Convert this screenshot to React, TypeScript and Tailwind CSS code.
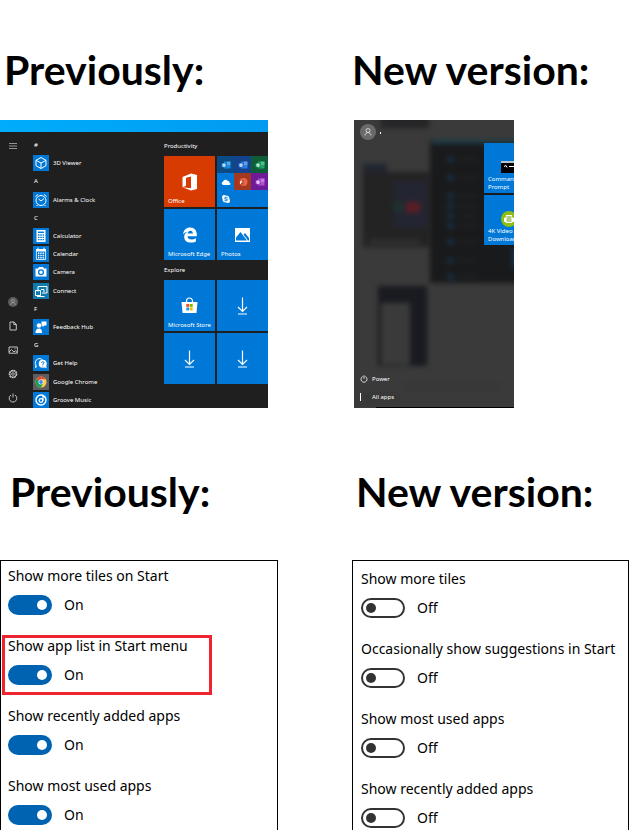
import React, { useState } from 'react';

const Glyph = ({ name }: { name: string }) => {
    const line = { fill: 'none', stroke: '#fff', strokeWidth: 1 };
    return (
        <svg viewBox="0 0 16 16" className="w-4 h-4 shrink-0">
            {name === 'viewer' && <path {...line} d="M8 2.500l5 2.800v5.400L8 13.500l-5-2.800V5.300zM3 5.300L8 8l5-2.700M8 8v5.500" />}
            {name === 'alarm' && (
                <>
                    <circle {...line} cx="8" cy="8.500" r="5" />
                    <path {...line} d="M5.500 7L8 9l3-2.500M2.500 4.500L5 2.500M13.500 4.500L11 2.500M4.500 13l-1 1M11.500 13l1 1" />
                </>
            )}
            {name === 'calculator' && (
                <>
                    <path fill="#fff" d="M3.500 2h9v12h-9z" />
                    <path stroke="#0078d7" strokeWidth="1.500" d="M5 4.300h6" />
                    <path stroke="#0078d7" strokeWidth="1.300" strokeDasharray="1.500 .8" d="M5 7h6M5 9.300h6M5 11.700h6" />
                </>
            )}
            {name === 'calendar' && (
                <>
                    <path fill="#fff" d="M3 3h10v2.500H3zM4.500 1.500h1V4h-1zM10.500 1.500h1V4h-1z" />
                    <path {...line} strokeWidth=".8" d="M3.400 5v8.500h9.200V5" />
                    <path stroke="#fff" strokeWidth="1.400" strokeDasharray="1 .7" d="M5 7.300h6.500M5 9.500h6.500M5 11.700h6.500" />
                </>
            )}
            {name === 'camera' && (
                <>
                    <path fill="#fff" d="M2.500 4.500H5L6 3h4l1 1.500h2.500v8h-11z" />
                    <circle cx="8" cy="8.300" r="2.400" fill="none" stroke="#0078d7" strokeWidth="1.300" />
                </>
            )}
            {name === 'connect' && <path {...line} d="M5 8.500V3.500h9v6.500H9M2.500 7.500h5v5h-5zM4 13.500h7.500M8 6.500h3v2.500" />}
            {name === 'feedback' && (
                <>
                    <circle cx="6" cy="6.500" r="2.300" fill="#fff" />
                    <path fill="#fff" d="M2.500 14c0-3 1.200-4.500 3.500-4.500S9 11 9 14zM8.500 2.500h5v4h-2L9.500 8V6.500h-1z" />
                </>
            )}
            {name === 'help' && (
                <>
                    <path {...line} d="M4 11.500l-1.500 1 .5-2.500a4 4 0 1 1 7-4.500" />
                    <circle cx="9.700" cy="8.800" r="4" fill="#fff" />
                    <path fill="#fff" d="M11 12l2.800 1.500L13 10z" />
                    <path fill="none" stroke="#0078d7" d="M8.500 7.800c0-1.600 2.500-1.500 2.500 0 0 .8-1.300 1-1.300 2M9.700 10.700v.8" />
                </>
            )}
            {name === 'chrome' && (
                <>
                    <circle cx="8" cy="8" r="5.500" fill="#ffcd40" />
                    <path fill="#dd4f43" d="M8 8L3.200 5.300A5.500 5.500 0 0 1 12.800 5.300H8z" />
                    <path fill="#1a9f5c" d="M3.200 5.300L8 8l2.400 1.300-2.600 4.200A5.500 5.500 0 0 1 3.200 5.300z" />
                    <circle cx="8" cy="8" r="2.500" fill="#fff" />
                    <circle cx="8" cy="8" r="1.900" fill="#4285f4" />
                </>
            )}
            {name === 'groove' && (
                <>
                    <circle {...line} strokeWidth="1.400" cx="8" cy="8" r="5" />
                    <circle {...line} strokeWidth="1.300" cx="8" cy="8.500" r="1.800" />
                    <path {...line} strokeWidth="1.200" d="M10 8.500V3.500l2 1.500" />
                </>
            )}
        </svg>
    );
};

const RailIcon = ({ name }: { name: string }) => (
    <svg viewBox="0 0 12 12" className="w-3 h-3" fill="none" stroke="#d4d4d4" strokeWidth=".9">
        {name === 'menu' && <path stroke="#a0a0a0" d="M2 3.500h8M2 6h8M2 8.500h8" />}
        {name === 'user' && (
            <>
                <circle cx="6" cy="6" r="5" fill="#5c5c5c" stroke="none" />
                <circle cx="6" cy="4.800" r="1.500" stroke="#aaa" strokeWidth=".7" />
                <path stroke="#aaa" strokeWidth=".7" d="M3.700 9c0-3.300 4.600-3.300 4.600 0" />
            </>
        )}
        {name === 'document' && <path d="M3 2h4l2.300 2.300V10H3zM6.800 2v2.600h2.500" />}
        {name === 'pictures' && <path d="M2 3h8.300v6.200H2zM2 8l2.500-2.500L7 8l1.300-1.300L10 8.300M7.500 4.700h1" />}
        {name === 'settings' && (
            <>
                <circle cx="6" cy="6" r="3.700" strokeWidth="1.200" strokeDasharray="1.900 .6" />
                <circle cx="6" cy="6" r="3" strokeWidth=".6" />
                <circle cx="6" cy="6" r="1.300" strokeWidth=".8" />
            </>
        )}
        {name === 'power' && <path d="M4 3a3.800 3.800 0 1 0 4 0M6 1.500v4" />}
    </svg>
);

const DownloadArrow = () => (
    <svg viewBox="0 0 20 20" className="w-5 h-5" fill="none" stroke="#fff" strokeWidth="1.200">
        <path d="M9.500 1.500v14M5 11l4.500 4.500L14 11M5 18h9" />
    </svg>
);

const OfficeLogo = () => (
    <svg viewBox="0 0 20 20" className="w-5 h-5">
        <path fill="#fff" fillRule="evenodd" d="M2.500 5l8.500-3.500L17 3v14l-6 1.500-8.500-3.200 8.500 1V4.500L6 5.700v8l-3.500 1.600z" />
    </svg>
);

const EdgeLogo = () => (
    <svg viewBox="0 0 20 20" className="w-5 h-5">
        <path fill="#fff" d="M3 9.300C3.600 5 6.300 2.500 10.200 2.500c4.300 0 6.600 3 6.600 6.800v1.900H7.500c.2 2.300 1.900 3.200 4.100 3.200 1.600 0 3-.4 4.300-1.200v3.200c-1.500.8-3.200 1.200-5.200 1.200-4 0-6.500-2.200-6.500-5.800 0-2.300 1.200-4.100 3.200-5.100C5.500 7 4 8 3 9.300zm4.600-.7h5.300c0-1.900-.8-2.900-2.500-2.900-1.500 0-2.500 1.100-2.800 2.900z" />
    </svg>
);

const PhotosLogo = () => (
    <svg viewBox="0 0 20 20" className="w-5 h-5">
        <path fill="#fff" d="M2 3h15v14H2z" />
        <path fill="#0078d7" d="M3 15.500v-3L7.500 7l6.500 8.500zM10.500 9.500L12 8l4 5v2.500h-1z" />
    </svg>
);

const StoreLogo = () => (
    <svg viewBox="0 0 20 20" className="w-5 h-5">
        <path fill="none" stroke="#fff" strokeWidth="1.200" d="M6.500 6.500V5a3 3 0 0 1 6 0v1.500" />
        <path fill="#fff" d="M1.500 6h16l-1 11h-14z" />
        <path fill="#f25022" d="M6.300 8h2.900v2.900H6.300z" />
        <path fill="#7fba00" d="M9.800 8h2.900v2.900H9.800z" />
        <path fill="#00a4ef" d="M6.300 11.500h2.900v2.900H6.300z" />
        <path fill="#ffb900" d="M9.800 11.500h2.900v2.900H9.800z" />
    </svg>
);

const BadgeIcon = ({ color }: { color: string }) => (
    <svg viewBox="0 0 10 10" className="w-2.5 h-2.5">
        <path fill={color} d="M3 1.500h6.500v7H3z" />
        <path fill="#fff" fillOpacity=".25" d="M6 1.500h3.500v3.500H6z" />
        <path fill={color} stroke="#0003" strokeWidth=".5" d="M.5 3h5v4.500h-5z" />
        <path fill="none" stroke="#fff" strokeWidth=".9" d="M2 4.200h2v2H2z" />
    </svg>
);

const OfficeFolder = () => (
    <div className="grid grid-cols-3 grid-rows-3 place-items-stretch bg-[#0078d7] *:flex *:items-center *:justify-center">
        <div className="bg-[#0b4a85]"><BadgeIcon color="#1a8ae0" /></div>
        <div className="bg-[#12438c]"><BadgeIcon color="#2f7de0" /></div>
        <div className="bg-[#0e5c38]"><BadgeIcon color="#21a567" /></div>
        <div>
            <svg viewBox="0 0 10 10" className="w-2.5 h-2.5">
                <path fill="#fff" d="M2 8a1.700 1.700 0 0 1 0-3.300A2.500 2.500 0 0 1 6.500 3.700 2 2 0 0 1 8.500 5.500 1.300 1.300 0 0 1 8.500 8z" />
            </svg>
        </div>
        <div className="bg-[#a4371f]">
            <svg viewBox="0 0 10 10" className="w-2.5 h-2.5">
                <circle cx="5.500" cy="5" r="4" fill="#e8674a" />
                <path fill="#c43e1c" d="M.5 3h5v4.500h-5z" />
                <path fill="none" stroke="#fff" strokeWidth=".9" d="M2.500 7V4h1.300v1.500H2.500" />
            </svg>
        </div>
        <div className="bg-[#6f1a96]"><BadgeIcon color="#b04fdc" /></div>
        <div>
            <svg viewBox="0 0 10 10" className="w-2.5 h-2.5">
                <circle cx="5" cy="5" r="3.500" fill="#fff" />
                <circle cx="3" cy="3" r="2" fill="#fff" />
                <circle cx="7" cy="7" r="2" fill="#fff" />
                <path fill="none" stroke="#0078d7" d="M6.500 3.700c-.8-.8-3-.6-3 .4 0 1.200 3 .6 3 1.800 0 1-2.300 1.200-3.100.2" />
            </svg>
        </div>
    </div>
);

const Tile = ({ label, children, color = 'bg-[#0078d7]' }: { label?: string; children: React.ReactNode; color?: string }) => (
    <button className={`relative flex items-center justify-center ${color}`} aria-label={label || 'Downloading app'}>
        {children}
        {label && <span className="absolute left-1 bottom-0.5 whitespace-nowrap text-[6px] leading-2">{label}</span>}
    </button>
);

const appRows = [
    { letter: '#' },
    { name: '3D Viewer', icon: 'viewer' },
    { letter: 'A' },
    { name: 'Alarms & Clock', icon: 'alarm' },
    { letter: 'C' },
    { name: 'Calculator', icon: 'calculator' },
    { name: 'Calendar', icon: 'calendar' },
    { name: 'Camera', icon: 'camera' },
    { name: 'Connect', icon: 'connect', color: 'bg-[#0e7ab0]' },
    { letter: 'F' },
    { name: 'Feedback Hub', icon: 'feedback' },
    { letter: 'G' },
    { name: 'Get Help', icon: 'help' },
    { name: 'Google Chrome', icon: 'chrome', color: 'bg-[#5d5d60]' },
    { name: 'Groove Music', icon: 'groove' },
];

const OldStartMenu = () => (
    <div className="flex flex-col w-[268px] h-72 overflow-hidden bg-[#1f1f1f] text-white text-[6px] leading-2">
        <div className="h-3 shrink-0 bg-linear-to-r from-[#00adfb] to-[#009bf0]"></div>
        <div className="flex flex-1 min-h-0">
            <nav className="flex flex-col items-center justify-between w-[26px] pt-2 pb-1">
                <button aria-label="Menu"><RailIcon name="menu" /></button>
                <div className="flex flex-col gap-3">
                    {['user', 'document', 'pictures', 'settings', 'power'].map((name) => (
                        <button key={name} aria-label={name}><RailIcon name={name} /></button>
                    ))}
                </div>
            </nav>
            <ul className="grid grid-rows-[repeat(15,minmax(0,1fr))] w-[138px] h-[273px] mt-1 pl-[7px]">
                {appRows.map((row) => (
                    <li key={row.name || row.letter} className="flex items-center gap-1">
                        {row.icon && <span className={row.color || 'bg-[#0078d7]'}><Glyph name={row.icon} /></span>}
                        {row.name || <span className="pl-px">{row.letter}</span>}
                    </li>
                ))}
            </ul>
            <div className="flex-1 pt-2.5">
                <h3 className="mb-1.5">Productivity</h3>
                <div className="grid grid-cols-2 auto-rows-[51px] gap-0.5">
                    <Tile label="Office" color="bg-[#d83b01]"><OfficeLogo /></Tile>
                    <OfficeFolder />
                    <Tile label="Microsoft Edge"><EdgeLogo /></Tile>
                    <Tile label="Photos"><PhotosLogo /></Tile>
                </div>
                <h3 className="my-1.5">Explore</h3>
                <div className="grid grid-cols-2 auto-rows-[51px] gap-0.5">
                    <Tile label="Microsoft Store"><StoreLogo /></Tile>
                    <Tile><DownloadArrow /></Tile>
                    <Tile><DownloadArrow /></Tile>
                    <Tile><DownloadArrow /></Tile>
                </div>
            </div>
        </div>
    </div>
);

// desktop seen through the acrylic of the full screen menu
const Backdrop = () => (
    <svg viewBox="0 0 160 288" className="absolute inset-0 w-full h-full" aria-hidden="true">
        <defs>
            <filter id="soft" x="-20%" y="-20%" width="140%" height="140%" colorInterpolationFilters="sRGB">
                <feGaussianBlur stdDeviation="2.600" />
            </filter>
        </defs>
        <rect width="160" height="288" fill="#3a3a3a" />
        <g filter="url(#soft)">
            <rect x="27" y="-6" width="48" height="14" fill="#252527" />
            <rect x="76" y="20" width="100" height="143" fill="#191a1b" />
            <rect x="78" y="20" width="100" height="4" fill="#1b3c4a" />
            <rect x="9" y="44" width="24" height="8" fill="#20252f" />
            <rect x="9" y="52" width="66" height="75" fill="#232324" />
            <rect x="40" y="62" width="33" height="45" fill="#232533" />
            <rect x="40" y="82" width="9" height="10" fill="#1f332f" />
            <rect x="52" y="82" width="14" height="11" fill="#5a1e26" />
            <rect x="15" y="120" width="50" height="4" fill="#343434" />
            {[39, 58, 76, 86, 96, 106, 122, 141, 157].map((y) => (
                <g key={y}>
                    <rect x="93" y={y - 3} width="7" height="6" fill="#182c40" />
                    <rect x="105" y={y - 1} width="18" height="2" fill="#242424" />
                </g>
            ))}
            <rect x="158" y="128" width="6" height="20" fill="#15334f" />
            <rect x="24" y="166" width="49" height="80" fill="#191b20" />
            <rect x="27" y="183" width="29" height="62" fill="#3a3a3a" />
            <rect x="10" y="276" width="34" height="2" fill="#303030" />
            <rect x="50" y="266" width="95" height="2" fill="#313131" />
        </g>
        <rect x="22" y="287" width="138" height="1" fill="#000" />
    </svg>
);

const NewStartMenu = () => (
    <div className="relative w-40 h-72 ml-0.5 overflow-hidden text-white text-[6px] leading-2">
        <Backdrop />
        <div className="relative flex h-full">
            <div className="flex flex-col justify-between w-[130px] shrink-0 pt-1 pb-[7px] pl-1.5">
                <button className="flex items-center gap-1" aria-label="Account">
                    <svg viewBox="0 0 16 16" className="w-4 h-4" fill="none" stroke="#ddd" strokeWidth=".9">
                        <circle cx="8" cy="8" r="8" fill="#6a6a6a" stroke="none" />
                        <circle cx="8" cy="6.500" r="2" />
                        <path d="M5 11.500c.3-4 5.700-4 6 0" />
                    </svg>
                    <span className="w-px h-0.5 mt-0.5 bg-white"></span>
                </button>
                <div className="flex flex-col gap-2.5">
                    <button className="flex items-center gap-1">
                        <svg viewBox="0 0 8 8" className="w-2 h-2" fill="none" stroke="#fff" strokeWidth=".8">
                            <path d="M2.700 1.500a3 3 0 1 0 2.600 0M4 .3v3.500" />
                        </svg>
                        Power
                    </button>
                    <button className="flex items-center gap-1">
                        <svg viewBox="0 0 8 8" className="w-2 h-2" stroke="#fff"><path d="M.5 0v8" /></svg>
                        All apps
                    </button>
                </div>
            </div>
            <div className="grid auto-rows-[50px] gap-0.5 w-[51px] shrink-0 pt-[23px]">
                <button className="flex flex-col justify-between pt-4 pb-0.5 bg-[#0078d7] text-left">
                    <svg viewBox="0 0 18 15" className="w-[18px] h-[15px] ml-4">
                        <path fill="#000" d="M1 2h17v12H1z" />
                        <path fill="#b8c4cc" d="M1 2h17v2H1z" />
                        <path fill="none" stroke="#fff" d="M4 7.500l2-1 1 2M9 7.500h5" />
                    </svg>
                    <span className="pl-1">Command Prompt</span>
                </button>
                <button className="flex flex-col justify-between pt-4 pb-0.5 bg-[#0078d7] text-left">
                    <svg viewBox="0 0 18 16" className="w-[18px] h-4 ml-4">
                        <circle cx="9" cy="8" r="8" fill="#8fbf12" />
                        <path fill="#fff" d="M4 10.500V7l2-1V4h6v2l2 1v3.500l-2 1V12H6v-.5z" />
                        <path fill="none" stroke="#6d9a00" d="M6.500 6h5M6.500 8h5M6.500 10h5" />
                    </svg>
                    <span className="pl-1">4K Video Downloader</span>
                </button>
            </div>
        </div>
    </div>
);

const Setting = ({ id, label, initial, marked }: { id: string; label: string; initial: boolean; marked?: boolean }) => {
    const [on, setOn] = useState(initial);
    return (
        <div className="relative h-[70px]">
            {marked && <div className="absolute -left-1.5 top-px w-[210px] h-[60px] border-3 border-[#ee2530] pointer-events-none"></div>}
            <label htmlFor={id} className="block h-6 whitespace-nowrap">{label}</label>
            <div className="flex items-center gap-3 h-5 mt-[7px]">
                <input
                    id={id}
                    type="checkbox"
                    role="switch"
                    checked={on}
                    onChange={(e) => setOn(e.target.checked)}
                    className="appearance-none flex items-center justify-start checked:justify-end w-11 h-5 px-[3px] rounded-full border-2 border-[#333] bg-white checked:border-[#0063b1] checked:bg-[#0063b1] before:w-2.5 before:h-2.5 before:rounded-full before:bg-[#333] checked:before:bg-white"
                />
                <span>{on ? 'On' : 'Off'}</span>
            </div>
        </div>
    );
};

const Title = ({ children }: { children: React.ReactNode }) => (
    <h2 className="font-[Lato,sans-serif] font-bold text-[41px] leading-12 whitespace-nowrap">{children}</h2>
);

const App = () => {
    return (
        <main className="grid grid-cols-[55%_45%] items-start bg-white pb-1.5 text-black font-['Noto_Sans',sans-serif]">
            <section>
                <div className="h-[120px] pt-[46px] pl-1"><Title>Previously:</Title></div>
                <OldStartMenu />
                <div className="h-38 pt-15 pl-2.5"><Title>Previously:</Title></div>
                <div className="w-[278px] h-[270px] pt-[3px] pl-[7px] overflow-hidden border border-b-0 border-black text-[14px] leading-6">
                    <Setting id="old-tiles" label="Show more tiles on Start" initial={true} />
                    <Setting id="old-list" label="Show app list in Start menu" initial={true} marked />
                    <Setting id="old-recent" label="Show recently added apps" initial={true} />
                    <Setting id="old-used" label="Show most used apps" initial={true} />
                </div>
            </section>
            <section>
                <div className="h-[120px] pt-[46px]"><Title>New version:</Title></div>
                <NewStartMenu />
                <div className="h-38 pt-15 pl-1"><Title>New version:</Title></div>
                <div className="w-[277px] h-[270px] pt-1.5 pl-2 overflow-hidden border border-b-0 border-black text-[14px] leading-6">
                    <Setting id="new-tiles" label="Show more tiles" initial={false} />
                    <Setting id="new-suggestions" label="Occasionally show suggestions in Start" initial={false} />
                    <Setting id="new-used" label="Show most used apps" initial={false} />
                    <Setting id="new-recent" label="Show recently added apps" initial={false} />
                </div>
            </section>
        </main>
    );
};

export default App;
